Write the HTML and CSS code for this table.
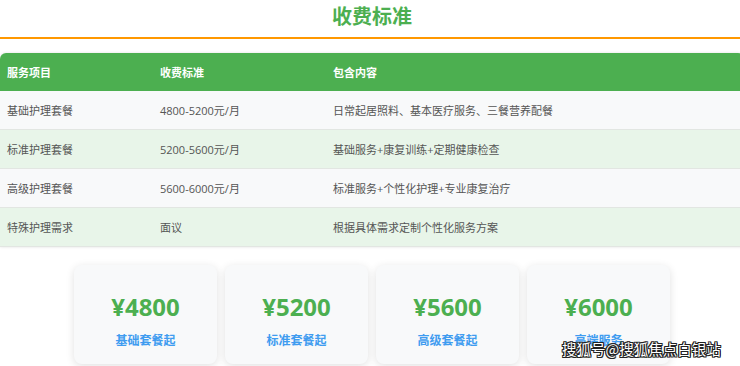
FILE: index.html
```html
<!DOCTYPE html>
<html lang="zh">
<head>
<meta charset="utf-8">
<link rel="stylesheet" href="styles.css">
</head>
<body>
<div class="page">
  <h1 class="title">收费标准</h1>
  <div class="table">
    <div class="row head">
      <div class="c1">服务项目</div><div class="c2">收费标准</div><div class="c3">包含内容</div>
    </div>
    <div class="row odd">
      <div class="c1">基础护理套餐</div><div class="c2">4800-5200元/月</div><div class="c3">日常起居照料、基本医疗服务、三餐营养配餐</div>
    </div>
    <div class="row even">
      <div class="c1">标准护理套餐</div><div class="c2">5200-5600元/月</div><div class="c3">基础服务+康复训练+定期健康检查</div>
    </div>
    <div class="row odd">
      <div class="c1">高级护理套餐</div><div class="c2">5600-6000元/月</div><div class="c3">标准服务+个性化护理+专业康复治疗</div>
    </div>
    <div class="row even">
      <div class="c1">特殊护理需求</div><div class="c2">面议</div><div class="c3">根据具体需求定制个性化服务方案</div>
    </div>
  </div>
  <div class="cards">
    <div class="card"><div class="price">¥4800</div><div class="label">基础套餐起</div></div>
    <div class="card"><div class="price">¥5200</div><div class="label">标准套餐起</div></div>
    <div class="card"><div class="price">¥5600</div><div class="label">高级套餐起</div></div>
    <div class="card"><div class="price">¥6000</div><div class="label">高端服务</div></div>
  </div>
  <div class="watermark">搜狐号@搜狐焦点白银站</div>
</div>
</body>
</html>
```

FILE: styles.css
```css
html, body {
  margin: 0;
  padding: 0;
  overflow: hidden;
  background: #ffffff;
}
body {
  font-family: "Open Sans", "Noto Sans CJK SC", sans-serif;
}
.page {
  position: relative;
  width: 744px;
  height: 366px;
}
.title {
  margin: 0;
  padding: 3px 0 8px;
  line-height: 26px;
  font-size: 20px;
  font-weight: 700;
  color: #4caf50;
  text-align: center;
  border-bottom: 2px solid #ff9800;
  font-family: "Noto Sans CJK SC", sans-serif;
}
.table {
  margin-top: 14px;
  border-radius: 6px 6px 0 0;
  overflow: hidden;
  box-shadow: 0 0 3px rgba(0,0,0,0.12);
}
.row {
  display: flex;
  align-items: center;
  height: 38px;
  border-bottom: 1px solid #e2e6e2;
  font-size: 11px;
  color: #555555;
}
.row > div {
  padding-left: 7px;
  box-sizing: border-box;
}
.c1 { width: 153px; }
.c2 { width: 173px; }
.c3 { flex: 1; }
.head {
  background: #4caf50;
  color: #ffffff;
  font-weight: 700;
  border-bottom: none;
}
.odd { background: #f8f9fa; }
.even { background: #e8f5e9; }
.cards {
  display: flex;
  gap: 8px;
  padding-left: 74px;
  margin-top: 18px;
}
.card {
  width: 143px;
  height: 99px;
  box-sizing: border-box;
  padding-top: 28px;
  background: #f8f9fa;
  border-radius: 8px;
  box-shadow: 0 2px 8px rgba(0,0,0,0.12);
  text-align: center;
}
.price {
  font-size: 24px;
  line-height: 28px;
  font-weight: 700;
  color: #4caf50;
}
.label {
  margin-top: 11px;
  font-size: 12px;
  line-height: 16px;
  font-weight: 700;
  color: #3f9cf0;
  font-family: "Noto Sans CJK SC", sans-serif;
}
.watermark {
  position: absolute;
  left: 562px;
  top: 339px;
  font-size: 14.5px;
  line-height: 20px;
  font-family: "Noto Sans CJK SC", sans-serif;
  color: #ffffff;
  text-shadow: -1px 0 #222, 1px 0 #222, 0 -1px #222, 0 1px #222, 1px 1px #222, -1px -1px #222, 1px -1px #222, -1px 1px #222;
}
```
